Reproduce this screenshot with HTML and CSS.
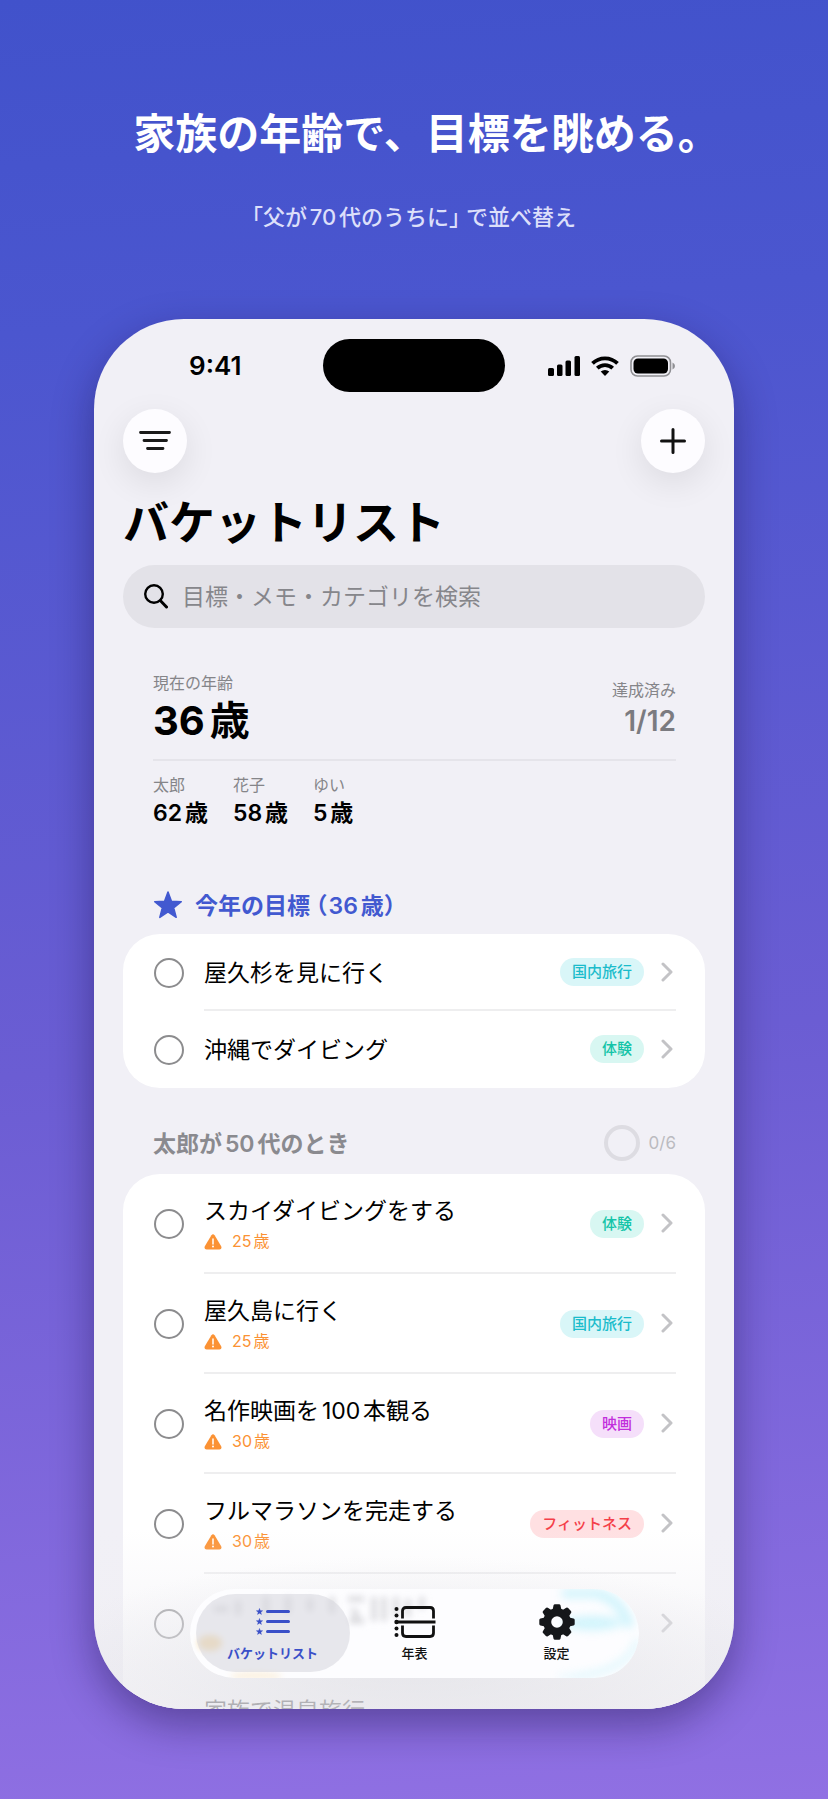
FILE: index.html
```html
<!DOCTYPE html>
<html lang="ja">
<head>
<meta charset="utf-8">
<meta name="viewport" content="width=device-width, initial-scale=1">
<title>バケットリスト</title>
<link rel="stylesheet" href="styles.css">
</head>
<body>
<svg class="defs" aria-hidden="true">
  <symbol id="chevron" viewBox="0 0 12 20"><path d="M2 2l8 8-8 8" fill="none" stroke="currentColor" stroke-width="3" stroke-linecap="round" stroke-linejoin="round"/></symbol>
  <symbol id="warn" viewBox="0 0 18 16"><path d="M7.400 1.300Q9-.7 10.600 1.300L17.200 12.200Q18.200 15.300 15.400 15.600H2.600Q-.2 15.300.8 12.200Z" fill="currentColor"/><path d="M9 5v5" stroke="#fff" stroke-width="1.500" stroke-linecap="round"/><circle cx="9" cy="12.600" r="1" fill="#fff"/></symbol>
  <symbol id="star" viewBox="0 0 28 27"><path d="M14 1l3.300 8.900 9.500.4-7.400 5.900 2.500 9.200-7.900-5.300-7.900 5.300 2.500-9.200L1.200 10.300l9.500-.4z" fill="currentColor" stroke="currentColor" stroke-width="1.500" stroke-linejoin="round"/></symbol>
</svg>
<main class="stage">
  <header class="caption">
    <h1>家族の年齢で、目標を眺める<span class="half">。</span></h1>
    <p><span class="half">「</span>父が70代のうちに<span class="half close">」</span>で並べ替え</p>
  </header>

  <section class="phone">
    <div class="status">
      <span class="time">9:41</span>
      <span class="island"></span>
      <span class="indicators">
        <svg width="32" height="20" viewBox="0 0 32 20"><rect x="0" y="12" width="6" height="8" rx="1.500"/><rect x="9" y="8.500" width="5.500" height="11.500" rx="1.500"/><rect x="17.500" y="4.500" width="5.500" height="15.500" rx="1.500"/><rect x="26.500" y="0" width="5.500" height="20" rx="1.500"/></svg>
        <svg width="28" height="20" viewBox="0 0 28 20"><g fill="none" stroke="#000" stroke-width="3.800"><path d="M1.500 7.400a18 18 0 0 1 25 0"/><path d="M6.300 12.200a11.200 11.200 0 0 1 15.400 0"/></g><path d="M14 20l-4.300-4.400a6.400 6.400 0 0 1 8.600 0z"/></svg>
        <svg width="46" height="22" viewBox="0 0 46 22"><rect x="1" y="1" width="39.500" height="20" rx="6.500" fill="none" stroke="#8f8f93" stroke-width="1.600"/><rect x="3.500" y="3.500" width="34.500" height="15" rx="4.500"/><path d="M42.500 7.500q2.500 1 2.500 3.500t-2.500 3.500z" fill="#8f8f93"/></svg>
      </span>
    </div>

    <nav class="actions">
      <button type="button" aria-label="並べ替え"><svg width="32" height="20" viewBox="0 0 32 20"><path d="M1.500 1.500h29M5 9.500h22.500M8.500 17.500h15.500" stroke="#1a1a1a" stroke-width="2.800" stroke-linecap="round"/></svg></button>
      <button type="button" aria-label="追加"><svg width="26" height="26" viewBox="0 0 26 26"><path d="M13 1.500v23M1.500 13h23" stroke="#111" stroke-width="3" stroke-linecap="round"/></svg></button>
    </nav>

    <h2 class="title">バケットリスト</h2>

    <label class="search">
      <svg width="24" height="25" viewBox="0 0 24 25"><circle cx="10" cy="10" r="8.800" fill="none" stroke="#000" stroke-width="2.400"/><path d="M16.500 16.800l6 6.200" stroke="#000" stroke-width="3" stroke-linecap="round"/></svg>
      <input type="search" placeholder="目標・メモ・カテゴリを検索" aria-label="目標・メモ・カテゴリを検索">
    </label>

    <section class="summary">
      <div class="ages">
        <div><p class="label">現在の年齢</p><p class="age">36歳</p></div>
        <div class="done"><p class="label">達成済み</p><p class="count">1/12</p></div>
      </div>
      <dl class="family">
        <div><dt>太郎</dt><dd>62歳</dd></div>
        <div><dt>花子</dt><dd>58歳</dd></div>
        <div><dt>ゆい</dt><dd>5歳</dd></div>
      </dl>
    </section>

    <div class="section-head current">
      <svg class="star"><use href="#star"/></svg>
      <h3>今年の目標<span class="half open">（</span>36歳<span class="half">）</span></h3>
    </div>
    <ul class="card compact">
      <li><input type="checkbox" id="g1"><div class="body"><label for="g1">屋久杉を見に行く</label><span class="tag travel">国内旅行</span><svg class="chev"><use href="#chevron"/></svg></div></li>
      <li><input type="checkbox" id="g2"><div class="body"><label for="g2">沖縄でダイビング</label><span class="tag experience">体験</span><svg class="chev"><use href="#chevron"/></svg></div></li>
    </ul>

    <div class="section-head decade">
      <h3>太郎が50代のとき</h3>
      <span class="ring"></span><span class="ratio">0/6</span>
    </div>
    <ul class="card">
      <li><input type="checkbox" id="g3"><div class="body"><label for="g3">スカイダイビングをする<small><svg class="warn"><use href="#warn"/></svg>25歳</small></label><span class="tag experience">体験</span><svg class="chev"><use href="#chevron"/></svg></div></li>
      <li><input type="checkbox" id="g4"><div class="body"><label for="g4">屋久島に行く<small><svg class="warn"><use href="#warn"/></svg>25歳</small></label><span class="tag travel">国内旅行</span><svg class="chev"><use href="#chevron"/></svg></div></li>
      <li><input type="checkbox" id="g5"><div class="body"><label for="g5">名作映画を100本観る<small><svg class="warn"><use href="#warn"/></svg>30歳</small></label><span class="tag movie">映画</span><svg class="chev"><use href="#chevron"/></svg></div></li>
      <li><input type="checkbox" id="g6"><div class="body"><label for="g6">フルマラソンを完走する<small><svg class="warn"><use href="#warn"/></svg>30歳</small></label><span class="tag fitness">フィットネス</span><svg class="chev"><use href="#chevron"/></svg></div></li>
      <li><input type="checkbox" aria-label="目標"><div class="body plain"><svg class="chev"><use href="#chevron"/></svg></div></li>
      <li class="last"><input type="checkbox" id="g8"><div class="body plain"><label for="g8">家族で温泉旅行<small><svg class="warn"><use href="#warn"/></svg></small></label></div></li>
    </ul>

    <div class="fade"></div>
    <nav class="tabs">
      <svg class="ghost" viewBox="0 0 449 89" preserveAspectRatio="none" aria-hidden="true">
        <g class="smudge"><path d="M24 20h14M48 12v14M76 8v18M98 8v16M120 10v12M142 8v16"/><path d="M158 10h16M162 20q10 8-2 12h14M184 8v24M194 8v24M206 8v20M218 10v18M232 8v12"/></g>
        <ellipse cx="20" cy="54" rx="12" ry="8" fill="#f8c66a" opacity=".55"/>
        <ellipse cx="66" cy="87" rx="26" ry="3" fill="#f8c66a" opacity=".3"/>
      </svg>
      <svg class="ghost soft" viewBox="0 0 449 89" preserveAspectRatio="none" aria-hidden="true">
        <path d="M372 4h32q26 4 36 34" fill="none" stroke="#8fe9f7" stroke-width="10" opacity=".4"/>
        <ellipse cx="402" cy="34" rx="30" ry="7" fill="#8fe9f7" opacity=".4"/>
        <path d="M448 50q-10 36-80 39" fill="none" stroke="#8fe9f7" stroke-width="4" opacity=".4"/>
      </svg>
      <a class="tab on" href="#list" aria-current="page">
        <svg width="36" height="30" viewBox="0 0 36 30"><g fill="none" stroke="currentColor" stroke-width="3" stroke-linecap="round"><path d="M12.500 4.500h21M12.500 14.500h21M12.500 24.500h21"/></g><g fill="currentColor"><svg x="1" y="1" width="7" height="7"><use href="#star"/></svg><svg x="1" y="11" width="7" height="7"><use href="#star"/></svg><svg x="1" y="21" width="7" height="7"><use href="#star"/></svg></g></svg>
        <span>バケットリスト</span>
      </a>
      <a class="tab" href="#timeline">
        <svg width="42" height="32" viewBox="0 0 42 32"><path d="M8.500 12.500V5q0-3.500 3.500-3.500h24q3.500 0 3.500 3.500v7.500M8.500 19.500V27q0 3.500 3.500 3.500h24q3.500 0 3.500-3.500v-7.500M2.500 16h39" fill="none" stroke="#111" stroke-width="2.800"/><g fill="#111"><circle cx="2.500" cy="3" r="2"/><circle cx="2.500" cy="9.500" r="2"/><circle cx="2.500" cy="16" r="2.200"/><circle cx="2.500" cy="22.500" r="2"/><circle cx="2.500" cy="29" r="2"/></g></svg>
        <span>年表</span>
      </a>
      <a class="tab" href="#settings">
        <svg width="36" height="36" viewBox="-18 -18 36 36"><circle r="9.800" fill="none" stroke="#15171a" stroke-width="8"/><g fill="#15171a"><path id="t" d="M-4.500-12l1-4.500q.3-1.200 1.500-1.200h4q1.200 0 1.500 1.200l1 4.500z"/><use href="#t" transform="rotate(45)"/><use href="#t" transform="rotate(90)"/><use href="#t" transform="rotate(135)"/><use href="#t" transform="rotate(180)"/><use href="#t" transform="rotate(225)"/><use href="#t" transform="rotate(270)"/><use href="#t" transform="rotate(315)"/></g></svg>
        <span>設定</span>
      </a>
    </nav>
  </section>
</main>
</body>
</html>
```
FILE: styles.css
```css
* { box-sizing: border-box; margin: 0; padding: 0; }
body {
  font-family: Inter, "Noto Sans CJK JP", sans-serif;
  font-size: 23px;
  color: #000;
  text-autospace: normal;
}
ul { list-style: none; }
button, input { font: inherit; border: 0; }
.defs { position: absolute; width: 0; height: 0; }
.half { font-feature-settings: "halt"; }
.open { margin: 0 1px 0 6px; }

.stage {
  min-height: 100vh;
  padding: 104px 94px 90px;
  background: linear-gradient(176deg, #4152cb 0%, #4b56cf 18%, #6b5dd3 58%, #9070e3 100%);
}
.caption { text-align: center; color: #fff; margin: 0 -60px; }
.caption h1 { padding-left: 4px; font-size: 42px; line-height: 60px; font-weight: 700; }
.caption p { margin-top: 38px; font-size: 22px; line-height: 30px; font-weight: 500; color: #dcdffa; }
.close { margin-right: 6px; }

.phone {
  position: relative;
  max-width: 640px;
  aspect-ratio: 640 / 1390;
  margin: 87px auto 0;
  padding: 20px 29px 0;
  overflow: hidden;
  border-radius: 90px;
  background: #f1f0f6;
  box-shadow: 0 16px 40px rgba(20, 10, 60, .4);
}

.status { display: grid; grid-template-columns: 1fr 182px 1fr; height: 53px; align-items: center; }
.time { padding-left: 66px; font-size: 26px; font-weight: 600; }
.island { height: 53px; border-radius: 27px; background: #000; }
.indicators { display: flex; justify-content: flex-end; align-items: center; gap: 11px; padding-right: 29px; }

.actions { display: flex; justify-content: space-between; margin-top: 17px; }
.actions button {
  display: grid; place-items: center;
  width: 64px; height: 64px;
  border-radius: 50%;
  background: #fdfcff;
  box-shadow: 0 10px 34px rgba(0, 0, 0, .09);
}
.title { margin-top: 19px; font-size: 46px; line-height: 60px; font-weight: 700; }

.search {
  display: flex; align-items: center; gap: 14px;
  height: 63px; margin-top: 13px; padding: 0 21px;
  border-radius: 32px;
  background: #e3e2e8;
}
.search svg { flex: none; }
.search input { flex: 1; min-width: 0; height: 40px; background: none; outline: 0; }
.search input::placeholder { color: #86868b; opacity: 1; }

.summary { margin: 43px 29px 0 30px; }
.ages { display: flex; justify-content: space-between; align-items: center; padding-bottom: 13px; border-bottom: 2px solid #e5e4ea; }
.label, dt { font-size: 16px; line-height: 24px; color: #858589; }
.age { padding-top: 1px; font-size: 40px; line-height: 50px; font-weight: 700; }
.done { text-align: right; }
.count { font-size: 28px; line-height: 38px; font-weight: 600; color: #7b7b80; }
.family { display: flex; gap: 25px; padding-top: 12px; }
dd { padding-top: 1px; font-size: 23px; line-height: 31px; font-weight: 600; }

.section-head { display: flex; align-items: center; height: 36px; padding: 0 29px 0 30px; }
.section-head h3 { padding-top: 2px; font-size: 23px; line-height: 34px; font-weight: 600; }
.current { margin-top: 58px; gap: 12px; color: #4259d0; }
.star { width: 30px; height: 28px; }
.decade { margin-top: 37px; color: #8a8a8f; }
.ring { width: 36px; height: 36px; margin-left: auto; border: 4px solid #dddce2; border-radius: 50%; }
.ratio { margin-left: 9px; font-size: 17px; color: #bbbbc0; }

.card { margin-top: 11px; border-radius: 37px; background: #fff; }
.decade + .card { margin-top: 13px; }
.card li { display: flex; align-items: center; gap: 20px; height: 100px; padding: 0 29px 0 31px; }
.card.compact li { height: 77px; }
.card .last { margin-top: -6px; }
.last input { align-self: flex-end; }
.card input {
  appearance: none; flex: none;
  width: 30px; height: 30px;
  border: 2px solid #8c8c8e; border-radius: 50%;
}
.body { display: flex; flex: 1; align-items: center; justify-content: flex-end; height: 100%; border-bottom: 2px solid #eeeeef; }
.plain, .card li:last-child .body { border-bottom-color: transparent; }
.body label { flex: 1; padding-top: 3px; line-height: 34px; }
.body small { display: flex; align-items: center; gap: 10px; font-size: 16px; line-height: 27px; color: #fb9234; }
.warn { width: 18px; height: 16px; }
.chev { width: 12px; height: 20px; margin: 0 3px 0 17px; color: #c3c3c6; }
.tag { margin-top: 1px; padding: 0 12px; border-radius: 14px; font-size: 15px; line-height: 28px; font-weight: 500; }
.travel { color: #1bbccb; background: #d9f6f8; }
.experience { color: #14c4a8; background: #d8f7f2; }
.movie { color: #c22edc; background: #f5dffa; }
.fitness { color: #f43f49; background: #ffe0e2; }

.fade {
  position: absolute; inset: auto 0 0; height: 180px;
  pointer-events: none;
  background:
    radial-gradient(60% 60% at 50% 75%, rgba(214, 214, 220, .45), rgba(214, 214, 220, 0)),
    linear-gradient(rgba(240, 239, 244, 0), rgba(240, 239, 244, .45) 50%, rgba(236, 235, 240, .72));
}
.tabs {
  position: absolute; left: 50%; bottom: 31px;
  display: flex; justify-content: center;
  width: 449px; height: 89px;
  margin-left: -224px;
  overflow: hidden;
  border-radius: 45px;
  background: #fdfdff;
}
.ghost { position: absolute; inset: 0; width: 100%; height: 100%; filter: blur(3px); }
.soft { filter: blur(5px); }
.smudge { fill: none; stroke: #d8d8dc; stroke-width: 5; }
.tab {
  position: relative;
  display: flex; flex-direction: column; align-items: center; justify-content: flex-end;
  width: 142px; padding: 12px 0 15px;
  font-size: 13px; line-height: 20px; font-weight: 500;
  color: #111; text-decoration: none;
}
.tab svg, .tab span { position: relative; }
.tab > svg { flex: none; margin: auto 0; }
.on { color: #3a50c8; font-weight: 600; }
.on::before {
  content: ""; position: absolute;
  inset: 5px -6px 6px;
  border-radius: 40px;
  background: rgba(214, 214, 220, .55);
}
```
